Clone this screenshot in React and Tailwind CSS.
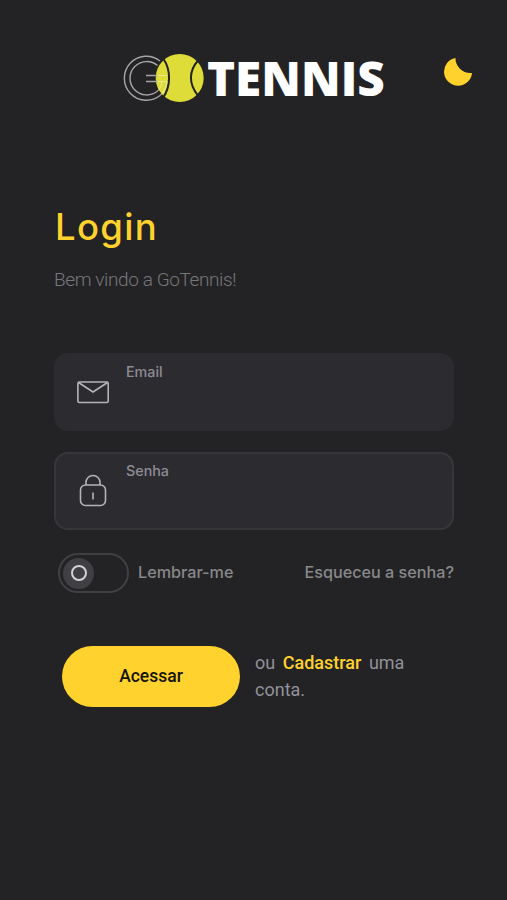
const Logo = () => {
  return (
    <div className="flex items-center">
      <svg width="84" height="52" viewBox="0 0 84 52" fill="none">
        <circle cx="59.7" cy="26" r="24" fill="#dedc38" />
        <path d="M43.500 7C51 18 51 34 43 46M78.500 8C68.500 19 68.500 32 78 43.500" stroke="#232325" strokeWidth="2" />
        <g stroke="#a5a5a5" strokeWidth="1.400">
          <path d="M40 9A22 22 0 1 0 40 43.500" />
          <path d="M37.500 13.500A16.700 16.700 0 1 0 37.500 39" />
          <path d="M26 23.500H37.500M26 29.500H37.500" />
        </g>
        <g stroke="#f0eeb0" strokeWidth="1.200" strokeOpacity="0.7">
          <path d="M37.500 23.500H47M37.500 29.500H47M37.500 39C40 36.500 41.500 34 42 29.500" />
          <path d="M40 43.500C44 40 46.500 35 47 29.500" />
        </g>
      </svg>

      <span className="ml-[3px] font-['Open_Sans',sans-serif] text-[47.600px] leading-[52px] font-extrabold text-white">
        TENNIS
      </span>
    </div>
  );
};

const MoonIcon = () => {
  return (
    <svg width="30" height="30" viewBox="0 0 30 30" fill="#ffd22d">
      <path d="M12.500 1A14 14 0 1 0 29 16C20 17 12 9 12.500 1Z" />
    </svg>
  );
};

const MailIcon = () => {
  return (
    <svg width="34" height="34" viewBox="0 0 34 34" fill="none" stroke="#b4b4b7" strokeWidth="1.600">
      <rect x="1.900" y="7" width="30.300" height="20.500" rx="1.500" />
      <path d="M2.500 7.500L17 17L31.500 7.500" />
    </svg>
  );
};

const LockIcon = () => {
  return (
    <svg width="34" height="34" viewBox="0 0 34 34" fill="none" stroke="#b4b4b7" strokeWidth="1.600">
      <rect x="4.500" y="11" width="25" height="20.500" rx="5" />
      <path d="M10 11V8.500A7 7 0 0 1 24 8.500V11M17 18.500V25.500" />
    </svg>
  );
};

const Field = ({ label, icon, className }) => {
  return (
    <label className={`flex h-[78px] rounded-[14px] border-2 bg-[#2c2b30] pl-5 ${className}`}>
      <span className="mt-5 h-[34px] w-[34px]">{icon}</span>
      <span className="ml-4 pt-[7px] font-['Inter',sans-serif] text-[14.300px] leading-5 font-medium text-[#8d8b95]">
        {label}
      </span>
    </label>
  );
};

const App = () => {
  return (
    <div className="flex h-[900px] w-[507px] flex-col bg-[#232325] font-['Roboto',sans-serif]">

      <header className="flex h-[52px] items-start justify-between mt-[52px] pl-[120px] pr-[34px]">
        <Logo />
        <button className="mt-[5px]" aria-label="Tema">
          <MoonIcon />
        </button>
      </header>

      <main className="mt-[99px] pl-[54px] pr-[53px]">

        <h1 className="pl-px font-['Inter',sans-serif] text-[36.500px] leading-[48px] font-medium tracking-[1.300px] text-[#ffd22d]">
          Login
        </h1>

        <p className="mt-[17px] text-[19px] leading-6 font-light tracking-[-0.400px] text-[#77777a]">
          Bem vindo a GoTennis!
        </p>

        <div className="mt-[61px] flex flex-col gap-[21px]">
          <Field label="Email" icon={<MailIcon />} className="border-[#2c2b30]" />
          <Field label="Senha" icon={<LockIcon />} className="border-[#37373b]" />
        </div>

        <div className="mt-[23px] flex items-center justify-between pl-1 font-['Inter',sans-serif] text-[16.200px] leading-6 font-medium text-[#88888a]">
          <div className="flex items-center gap-[9px]">
            <button className="flex h-10 w-[71px] items-center rounded-full border-2 border-[#404043] pl-[3px]" aria-label="Lembrar-me">
              <span className="flex h-[31px] w-[31px] items-center justify-center rounded-full bg-[#404044]">
                <span className="h-4 w-4 rounded-full border-2 border-[#d2d2d4]" />
              </span>
            </button>
            <span className="-mt-[3px]">Lembrar-me</span>
          </div>
          <a className="-mt-[3px]">Esqueceu a senha?</a>
        </div>

        <div className="mt-[53px] flex items-center pl-2">
          <button className="h-[61px] w-[178px] rounded-full bg-[#ffd22d] text-[17.500px] font-medium text-[#151408]">
            Acessar
          </button>
          <div className="-mt-[2px] ml-[15px] text-[18px] leading-[27px] text-[#92919a]">
            <div className="flex gap-[7.500px]">
              <span>ou</span>
              <a className="font-medium text-[#ffd22d]">Cadastrar</a>
              <span>uma</span>
            </div>
            <div>conta.</div>
          </div>
        </div>

      </main>

    </div>
  );
};

export default App;
